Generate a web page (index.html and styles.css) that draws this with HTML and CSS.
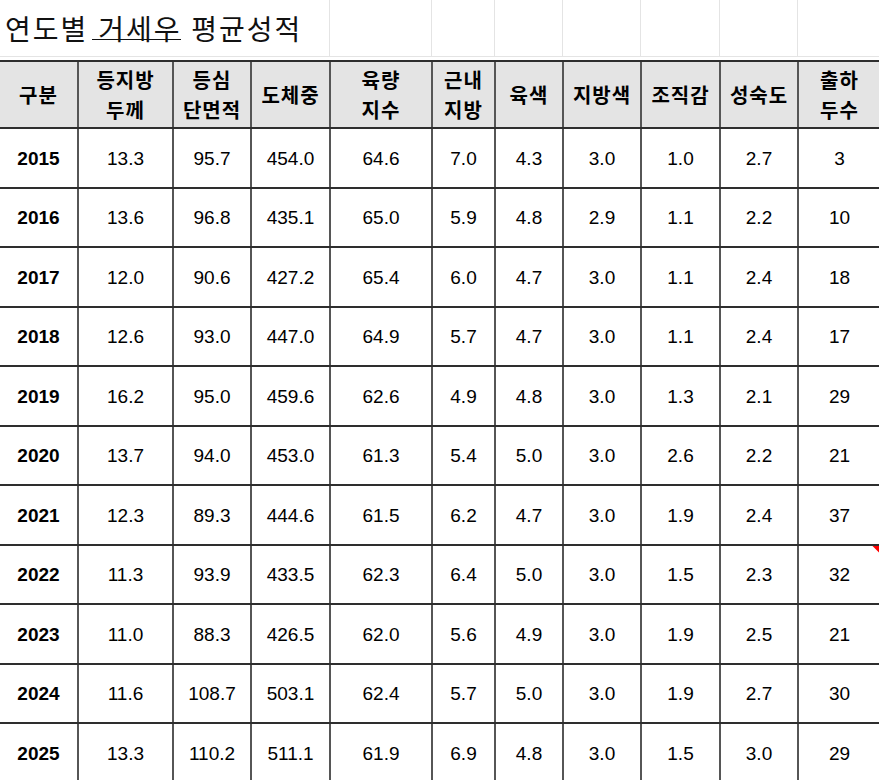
FILE: index.html
```html
<!DOCTYPE html>
<html lang="ko">
<head>
<meta charset="utf-8">
<title>연도별 거세우 평균성적</title>
<link rel="stylesheet" href="styles.css">
</head>
<body>
<div class="sheet">
  <div class="title-row">
    <div class="title-cell"><h1 class="title">연도별 <span class="ul">거세우</span> 평균성적</h1></div>
    <div class="grid-cell"></div>
    <div class="grid-cell"></div>
    <div class="grid-cell"></div>
    <div class="grid-cell"></div>
    <div class="grid-cell"></div>
    <div class="grid-cell"></div>
    <div class="grid-cell"></div>
  </div>
  <div class="spacer"></div>
  <div class="table">
    <div class="row head">
      <div class="cell">구분</div>
      <div class="cell">등지방<br>두께</div>
      <div class="cell">등심<br>단면적</div>
      <div class="cell">도체중</div>
      <div class="cell">육량<br>지수</div>
      <div class="cell">근내<br>지방</div>
      <div class="cell">육색</div>
      <div class="cell">지방색</div>
      <div class="cell">조직감</div>
      <div class="cell">성숙도</div>
      <div class="cell">출하<br>두수</div>
    </div>
    <div class="row"><div class="cell year">2015</div><div class="cell">13.3</div><div class="cell">95.7</div><div class="cell">454.0</div><div class="cell">64.6</div><div class="cell">7.0</div><div class="cell">4.3</div><div class="cell">3.0</div><div class="cell">1.0</div><div class="cell">2.7</div><div class="cell">3</div></div>
    <div class="row"><div class="cell year">2016</div><div class="cell">13.6</div><div class="cell">96.8</div><div class="cell">435.1</div><div class="cell">65.0</div><div class="cell">5.9</div><div class="cell">4.8</div><div class="cell">2.9</div><div class="cell">1.1</div><div class="cell">2.2</div><div class="cell">10</div></div>
    <div class="row"><div class="cell year">2017</div><div class="cell">12.0</div><div class="cell">90.6</div><div class="cell">427.2</div><div class="cell">65.4</div><div class="cell">6.0</div><div class="cell">4.7</div><div class="cell">3.0</div><div class="cell">1.1</div><div class="cell">2.4</div><div class="cell">18</div></div>
    <div class="row"><div class="cell year">2018</div><div class="cell">12.6</div><div class="cell">93.0</div><div class="cell">447.0</div><div class="cell">64.9</div><div class="cell">5.7</div><div class="cell">4.7</div><div class="cell">3.0</div><div class="cell">1.1</div><div class="cell">2.4</div><div class="cell">17</div></div>
    <div class="row"><div class="cell year">2019</div><div class="cell">16.2</div><div class="cell">95.0</div><div class="cell">459.6</div><div class="cell">62.6</div><div class="cell">4.9</div><div class="cell">4.8</div><div class="cell">3.0</div><div class="cell">1.3</div><div class="cell">2.1</div><div class="cell">29</div></div>
    <div class="row"><div class="cell year">2020</div><div class="cell">13.7</div><div class="cell">94.0</div><div class="cell">453.0</div><div class="cell">61.3</div><div class="cell">5.4</div><div class="cell">5.0</div><div class="cell">3.0</div><div class="cell">2.6</div><div class="cell">2.2</div><div class="cell">21</div></div>
    <div class="row"><div class="cell year">2021</div><div class="cell">12.3</div><div class="cell">89.3</div><div class="cell">444.6</div><div class="cell">61.5</div><div class="cell">6.2</div><div class="cell">4.7</div><div class="cell">3.0</div><div class="cell">1.9</div><div class="cell">2.4</div><div class="cell">37</div></div>
    <div class="row"><div class="cell year">2022</div><div class="cell">11.3</div><div class="cell">93.9</div><div class="cell">433.5</div><div class="cell">62.3</div><div class="cell">6.4</div><div class="cell">5.0</div><div class="cell">3.0</div><div class="cell">1.5</div><div class="cell">2.3</div><div class="cell has-note">32<span class="note"></span></div></div>
    <div class="row"><div class="cell year">2023</div><div class="cell">11.0</div><div class="cell">88.3</div><div class="cell">426.5</div><div class="cell">62.0</div><div class="cell">5.6</div><div class="cell">4.9</div><div class="cell">3.0</div><div class="cell">1.9</div><div class="cell">2.5</div><div class="cell">21</div></div>
    <div class="row"><div class="cell year">2024</div><div class="cell">11.6</div><div class="cell">108.7</div><div class="cell">503.1</div><div class="cell">62.4</div><div class="cell">5.7</div><div class="cell">5.0</div><div class="cell">3.0</div><div class="cell">1.9</div><div class="cell">2.7</div><div class="cell">30</div></div>
    <div class="row"><div class="cell year">2025</div><div class="cell">13.3</div><div class="cell">110.2</div><div class="cell">511.1</div><div class="cell">61.9</div><div class="cell">6.9</div><div class="cell">4.8</div><div class="cell">3.0</div><div class="cell">1.5</div><div class="cell">3.0</div><div class="cell">29</div></div>
  </div>
</div>
</body>
</html>
```
FILE: styles.css
```css
html, body {
  margin: 0;
  padding: 0;
  background: #ffffff;
  overflow: hidden;
}

.sheet {
  width: 960px;
  margin-left: -2px;
  color: #000;
}

.title-row {
  display: grid;
  grid-template-columns: 331px 102px 63px 68px 78px 79px 78px 83px;
  height: 56px;
  border-bottom: 1px solid #e4e4e4;
}

.title-cell {
  display: flex;
  align-items: center;
  padding-left: 7px;
  overflow: visible;
  white-space: nowrap;
}

.grid-cell {
  border-left: 1px solid #e4e4e4;
}

.title {
  margin: 0;
  font-family: "Noto Sans CJK KR", "Noto Sans", sans-serif;
  font-size: 28px;
  font-weight: 400;
  line-height: 1;
  letter-spacing: 2px;
  color: #111;
}

.ul {
  display: inline-block;
  margin-left: -6px;
  padding-left: 6px;
  line-height: 22px;
  border-bottom: 1px solid #111;
}

.spacer {
  height: 3px;
}

.table {
  width: 960px;
}

.row {
  display: grid;
  grid-template-columns: 79px 95px 78px 79px 102px 63px 68px 78px 79px 78px 83px 60px;
  height: 59.5px;
  border-top: 2px solid #2e2e2e;
  box-sizing: border-box;
}

.row.head {
  height: 67px;
  background: #e4e4e4;
}

.cell {
  position: relative;
  border-left: 2px solid #565656;
  display: flex;
  align-items: center;
  justify-content: center;
  text-align: center;
  font-family: "Liberation Sans", Arial, sans-serif;
  font-size: 19px;
  padding-top: 2px;
  box-sizing: border-box;
}

.head .cell {
  font-family: "Noto Sans CJK KR", "Noto Sans", sans-serif;
  font-weight: 700;
  font-size: 20px;
  letter-spacing: 1px;
  line-height: 30px;
  padding-top: 0;
}

.cell.year {
  font-weight: 700;
}

.note {
  position: absolute;
  top: 0;
  right: 0;
  width: 8px;
  height: 8px;
  background: #ff0000;
  clip-path: polygon(0 0, 100% 0, 100% 100%);
}
```
